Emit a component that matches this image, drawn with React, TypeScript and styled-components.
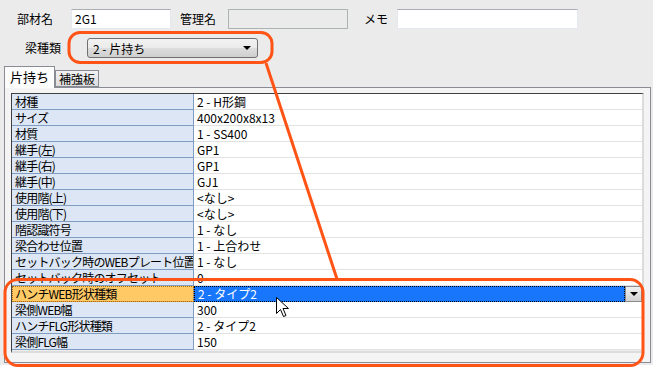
import * as React from "react"
import styled, { createGlobalStyle } from "styled-components"

const GlobalStyle = createGlobalStyle`
    html, body {
        margin: 0;
        padding: 0;
        background: #ffffff;
    }
    body {
        font-family: "Noto Sans CJK JP", "Liberation Sans", sans-serif;
        font-size: 12px;
        color: #000;
    }
`

interface GridRow {
    label: string;
    value: string;
    selected?: boolean;
}

const rows: GridRow[] = [
    { label: "材種", value: "2 - H形鋼" },
    { label: "サイズ", value: "400x200x8x13" },
    { label: "材質", value: "1 - SS400" },
    { label: "継手(左)", value: "GP1" },
    { label: "継手(右)", value: "GP1" },
    { label: "継手(中)", value: "GJ1" },
    { label: "使用階(上)", value: "<なし>" },
    { label: "使用階(下)", value: "<なし>" },
    { label: "階認識符号", value: "1 - なし" },
    { label: "梁合わせ位置", value: "1 - 上合わせ" },
    { label: "セットバック時のWEBプレート位置", value: "1 - なし" },
    { label: "セットバック時のオフセット", value: "0" },
    { label: "ハンチWEB形状種類", value: "2 - タイプ2", selected: true },
    { label: "梁側WEB幅", value: "300" },
    { label: "ハンチFLG形状種類", value: "2 - タイプ2" },
    { label: "梁側FLG幅", value: "150" },
]

const Page = styled.div`
    position: relative;
    width: 653px;
    height: 384px;
    overflow: hidden;
    background: #ffffff;
`

const Form = styled.div`
    width: 653px;
    height: 365px;
    box-sizing: border-box;
    padding-top: 9px;
    background: #ebebeb;
`

const FieldRow = styled.div<{ $indent: number; $top?: number }>`
    display: flex;
    align-items: center;
    height: 20px;
    padding-left: ${p => p.$indent}px;
    margin-top: ${p => p.$top || 0}px;
`

const Label = styled.span<{ $width: number }>`
    width: ${p => p.$width}px;
    flex: none;
    line-height: 20px;
    white-space: nowrap;
`

const TextBox = styled.div<{ $width: number; $disabled?: boolean }>`
    width: ${p => p.$width}px;
    height: 20px;
    box-sizing: border-box;
    flex: none;
    border: 1px solid #e3e9ef;
    border-top-color: #abadb3;
    background: ${p => (p.$disabled ? "#ebebeb" : "#ffffff")};
    ${p => (p.$disabled ? "border-color: #adb2b5;" : "")}
    padding-left: 3px;
    line-height: 18px;
`

const Gap = styled.div<{ $width: number }>`
    width: ${p => p.$width}px;
    flex: none;
`

const Combo = styled.div`
    width: 171px;
    height: 20px;
    box-sizing: border-box;
    flex: none;
    display: flex;
    align-items: center;
    justify-content: space-between;
    padding: 0 6px 0 5px;
    border: 1px solid #707070;
    border-radius: 3px;
    background: linear-gradient(#f2f2f2, #ebebeb 50%, #dddddd 51%, #cfcfcf);
`

const Arrow = styled.span`
    width: 0;
    height: 0;
    border-left: 4px solid transparent;
    border-right: 4px solid transparent;
    border-top: 4px solid #000;
`

const Tabs = styled.div`
    margin: 8px 2px 0 4px;
`

const TabStrip = styled.div`
    display: flex;
    align-items: flex-end;
    height: 21px;
`

const Tab = styled.div<{ $active?: boolean }>`
    box-sizing: border-box;
    height: ${p => (p.$active ? 22 : 17)}px;
    margin-bottom: ${p => (p.$active ? -1 : 0)}px;
    padding: 0 ${p => (p.$active ? 5 : 3)}px;
    border: 1px solid #898c95;
    border-bottom: ${p => (p.$active ? "none" : "1px solid #898c95")};
    background: ${p => (p.$active ? "#fcfcfc" : "linear-gradient(#f2f2f2, #dcdcdc)")};
    line-height: ${p => (p.$active ? 20 : 15)}px;
    font-size: ${p => (p.$active ? 13 : 12)}px;
    position: relative;
    z-index: ${p => (p.$active ? 1 : 0)};
`

const Panel = styled.div`
    height: 276px;
    box-sizing: border-box;
    border: 1px solid #898c95;
    background: #f4f4f4;
    padding: 5px 6px 0 6px;
`

const Grid = styled.div`
    height: 260px;
    box-sizing: border-box;
    border-top: 1px solid #404040;
    border-left: 1px solid #404040;
    border-right: 2px solid #dcdcdc;
    border-bottom: 2px solid #dcdcdc;
    background: #eeeeee;
    display: flex;
    flex-direction: column;
`

const Row = styled.div`
    display: flex;
    height: 16px;
    flex: none;
`

const LabelCell = styled.div<{ $selected?: boolean }>`
    width: 182px;
    flex: none;
    box-sizing: border-box;
    padding-left: 3px;
    line-height: 15px;
    letter-spacing: -0.8px;
    white-space: nowrap;
    overflow: hidden;
    background: ${p => (p.$selected ? "#ffc965" : "#dce6f4")};
    border-right: 1px solid #7f9dc3;
    border-bottom: 1px solid ${p => (p.$selected ? "#e59f3c" : "#7f9dc3")};
    ${p => (p.$selected ? "outline: 1px dotted #b06a10; outline-offset: -1px;" : "")}
`

const ValueCell = styled.div`
    flex: 1;
    box-sizing: border-box;
    padding-left: 3px;
    line-height: 15px;
    background: #ffffff;
    border-bottom: 1px solid #e2e2e2;
    white-space: nowrap;
`

const EditCell = styled.div`
    flex: 1;
    display: flex;
    background: #ffffff;
`

const EditValue = styled.div`
    flex: 1;
    box-sizing: border-box;
    padding-left: 3px;
    line-height: 14px;
    color: #ffffff;
    background: #1776fc;
    border: 1px dotted #000;
`

const DropButton = styled.div`
    width: 17px;
    height: 16px;
    box-sizing: border-box;
    flex: none;
    display: flex;
    align-items: center;
    justify-content: center;
    border: 1px solid #8a8a8a;
    background: linear-gradient(#f0f0f0, #d2d2d2);
`

const Overlay = styled.svg`
    position: absolute;
    left: 0;
    top: 0;
    pointer-events: none;
`

const App: React.FC = () => {
    return (
        <>
            <GlobalStyle />
            <Page>
                <Form>
                    <FieldRow $indent={17}>
                        <Label $width={54}>部材名</Label>
                        <TextBox $width={100}>2G1</TextBox>
                        <Gap $width={9} />
                        <Label $width={48}>管理名</Label>
                        <TextBox $width={120} $disabled />
                        <Gap $width={16} />
                        <Label $width={33}>メモ</Label>
                        <TextBox $width={181} />
                    </FieldRow>
                    <FieldRow $indent={25} $top={9}>
                        <Label $width={62}>梁種類</Label>
                        <Combo>
                            <span>2 - 片持ち</span>
                            <Arrow />
                        </Combo>
                    </FieldRow>
                    <Tabs>
                        <TabStrip>
                            <Tab $active>片持ち</Tab>
                            <Tab>補強板</Tab>
                        </TabStrip>
                        <Panel>
                            <Grid>
                                {rows.map(r => (
                                    <Row key={r.label}>
                                        <LabelCell $selected={r.selected}>{r.label}</LabelCell>
                                        {r.selected ? (
                                            <EditCell>
                                                <EditValue>{r.value}</EditValue>
                                                <DropButton>
                                                    <Arrow />
                                                </DropButton>
                                            </EditCell>
                                        ) : (
                                            <ValueCell>{r.value}</ValueCell>
                                        )}
                                    </Row>
                                ))}
                            </Grid>
                        </Panel>
                    </Tabs>
                </Form>
                <Overlay width={653} height={384} viewBox="0 0 653 384">
                    <g fill="none" stroke="#ff5416" strokeWidth={3}>
                        <rect x={69} y={32.5} width={203} height={30} rx={11} />
                        <line x1={266} y1={63} x2={337} y2={279} />
                        <rect x={5} y={279.5} width={638} height={86} rx={13} />
                    </g>
                    <path
                        d="M276.5 297.5 L276.5 313.5 L280.5 309.5 L283.5 316.5 L286 315.5 L283 308.5 L288.5 308.5 Z"
                        fill="#ffffff"
                        stroke="#000000"
                        strokeWidth={1}
                    />
                </Overlay>
            </Page>
        </>
    )
}

export default App
